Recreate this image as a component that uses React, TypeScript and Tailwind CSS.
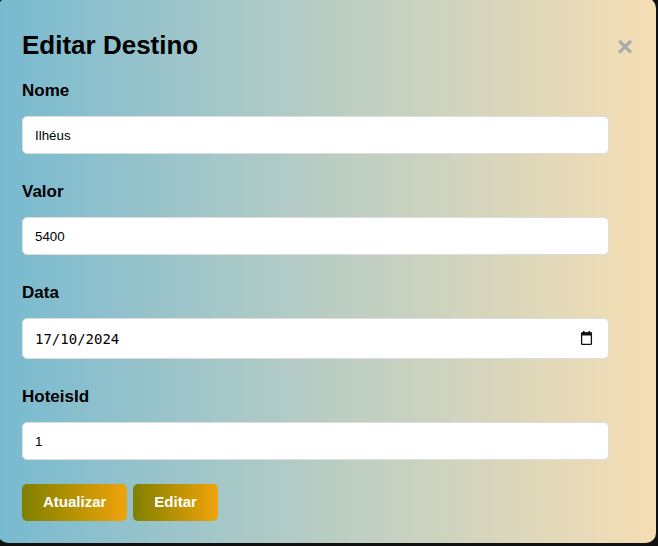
import React from "react";

const FIELDS = [
  { id: "nome", label: "Nome", value: "Ilhéus" },
  { id: "valor", label: "Valor", value: "5400" },
  { id: "data", label: "Data", value: "17/10/2024", date: true },
  { id: "hoteisId", label: "HoteisId", value: "1" },
];

function CalendarIcon() {
  return (
    <svg width="13" height="14" viewBox="0 0 13 14" className="absolute right-[16px] top-[13px] pointer-events-none">
      <rect x="3" y="0" width="1.5" height="3" fill="#111" />
      <rect x="8.5" y="0" width="1.5" height="3" fill="#111" />
      <rect x="1" y="1.5" width="11" height="3" fill="#111" />
      <rect x="1.6" y="2" width="9.8" height="11.4" rx="0.8" fill="none" stroke="#111" strokeWidth="1.3" />
    </svg>
  );
}

export default function App() {
  return (
    <div className="w-[658px] h-[546px] bg-[#111] overflow-hidden font-['Liberation_Sans',Arial,sans-serif]">
      {/* Modal */}
      <div className="relative ml-[-2px] mt-[-2px] w-[658px] h-[545px] rounded-[10px] bg-gradient-to-r from-[#77bad0] to-[#f5deb3] pl-[24px] pt-[32px]">
        <h2 className="text-[26px] leading-[30px] font-bold text-black">Editar Destino</h2>
        <span className="absolute right-[23px] top-[33px] text-[28px] leading-[32px] font-bold text-[#aaa] cursor-pointer">
          ×
        </span>

        <form className="mt-[21px] flex flex-col">
          {FIELDS.map((f) => (
            <div key={f.id} className="flex flex-col">
              <label htmlFor={f.id} className="text-[17px] leading-[20px] font-bold text-black mb-[15px]">
                {f.label}
              </label>
              {f.date ? (
                <div className="relative w-[587px] mb-[28px]">
                  <input
                    id={f.id}
                    type="text"
                    defaultValue={f.value}
                    className="w-full h-[41px] px-[12px] bg-white rounded-[5px] border border-[#ddd] text-[14px] text-black font-['DejaVu_Sans_Mono',monospace]"
                  />
                  <CalendarIcon />
                </div>
              ) : (
                <input
                  id={f.id}
                  type="text"
                  defaultValue={f.value}
                  className="w-[587px] h-[38px] px-[12px] bg-white rounded-[5px] border border-[#ddd] text-[13.333px] text-black mb-[28px]"
                />
              )}
            </div>
          ))}

          <div className="flex gap-[6px] mt-[-4px]">
            <button
              type="button"
              className="h-[37px] px-[21px] rounded-[5px] bg-gradient-to-r from-[#808000] to-[#f0a30a] text-white text-[15px] font-bold"
            >
              Atualizar
            </button>
            <button
              type="button"
              className="h-[37px] px-[21px] rounded-[5px] bg-gradient-to-r from-[#808000] to-[#f0a30a] text-white text-[15px] font-bold"
            >
              Editar
            </button>
          </div>
        </form>
      </div>
    </div>
  );
}
